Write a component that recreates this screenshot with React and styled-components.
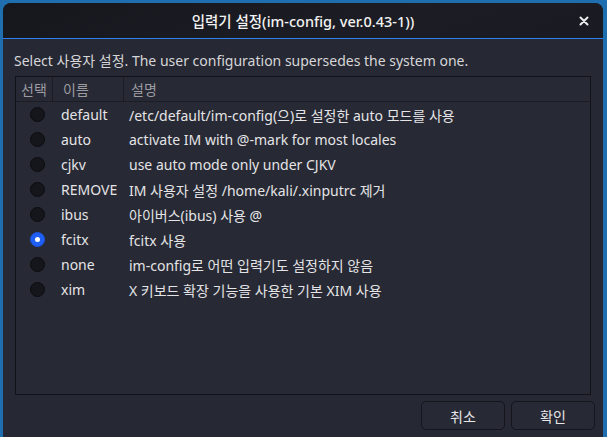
import React from "react";
import styled, { createGlobalStyle } from "styled-components";

const GlobalStyle = createGlobalStyle`
  html, body {
    margin: 0;
    padding: 0;
    background: #1f6eaf;
    overflow: hidden;
  }
  body {
    font-family: "Noto Sans", "Noto Sans CJK KR", sans-serif;
    font-size: 14px;
  }
`;

const Desktop = styled.div`
  width: 607px;
  height: 437px;
  padding: 3px 4px 0 3px;
  box-sizing: border-box;
  overflow: hidden;
`;

const Dialog = styled.div`
  width: 600px;
  height: 460px;
  background: #262833;
  border-radius: 8px 8px 0 0;
  overflow: hidden;
  display: flex;
  flex-direction: column;
`;

const Header = styled.div`
  height: 35px;
  flex-shrink: 0;
  background: linear-gradient(160deg, #16171d 0%, #1c1d24 60%, #1a1b22 100%);
  border-bottom: 1px solid #2f7fee;
  display: grid;
  grid-template-columns: 40px 1fr 40px;
  align-items: center;
`;

const Title = styled.div`
  grid-column: 2;
  text-align: center;
  color: #f2f2f2;
  font-size: 14.5px;
  font-weight: 500;
`;

const Close = styled.div`
  grid-column: 3;
  display: flex;
  justify-content: center;
  color: #e8e8e8;
  padding-left: 2px;
`;

const Body = styled.div`
  flex: 1;
  display: flex;
  flex-direction: column;
  padding: 12px 12px 0 12px;
`;

const Lead = styled.div`
  color: #d6d6d8;
  font-size: 14px;
  line-height: 20px;
  margin-left: -1px;
  margin-bottom: 5px;
`;

const TableBox = styled.div`
  width: 576px;
  height: 319px;
  box-sizing: border-box;
  border: 1px solid #121318;
  background: #272934;
  display: flex;
  flex-direction: column;
`;

const HeadRow = styled.div`
  display: grid;
  grid-template-columns: 37px 71px 1fr;
  height: 24px;
  border-bottom: 1px solid #1c1d24;
`;

const HeadCell = styled.div`
  color: #9c9ca2;
  font-size: 14px;
  display: flex;
  align-items: center;
  padding-left: ${(p) => p.$pad || 5}px;
  border-right: ${(p) => (p.$last ? "none" : "1px solid #1c1d24")};
`;

const Row = styled.div`
  display: grid;
  grid-template-columns: 42px 71px 1fr;
  height: 25px;
  align-items: center;
  color: #e4e4e6;
  font-size: 14px;
  &:first-of-type {
    margin-top: 1px;
  }
`;

const RadioCell = styled.div`
  display: flex;
  justify-content: center;
  padding-left: 1px;
`;

const Radio = styled.span`
  width: 15px;
  height: 15px;
  border-radius: 50%;
  box-sizing: border-box;
  background: ${(p) => (p.$on ? "#1f5ff5" : "#15161b")};
  border: 1px solid ${(p) => (p.$on ? "#1b55e0" : "#0c0c10")};
  display: flex;
  align-items: center;
  justify-content: center;
  &::after {
    content: "";
    display: ${(p) => (p.$on ? "block" : "none")};
    width: 5px;
    height: 5px;
    border-radius: 50%;
    background: #ffffff;
  }
`;

const NameCell = styled.div`
  padding-left: 3px;
  white-space: nowrap;
`;

const DescCell = styled.div`
  padding-left: 0;
  white-space: nowrap;
`;

const Footer = styled.div`
  display: flex;
  justify-content: flex-end;
  gap: 6px;
  margin-top: 6px;
  margin-right: -4px;
`;

const Button = styled.button`
  width: 84px;
  height: 29px;
  border-radius: 5px;
  border: 1px solid #15161c;
  background: #272935;
  color: #e6e6e8;
  font-family: "Noto Sans", "Noto Sans CJK KR", sans-serif;
  font-size: 14px;
  padding: 0;
`;

const rows = [
  ["default", "/etc/default/im-config(으)로 설정한 auto 모드를 사용"],
  ["auto", "activate IM with @-mark for most locales"],
  ["cjkv", "use auto mode only under CJKV"],
  ["REMOVE", "IM 사용자 설정 /home/kali/.xinputrc 제거"],
  ["ibus", "아이버스(ibus) 사용 @"],
  ["fcitx", "fcitx 사용", true],
  ["none", "im-config로 어떤 입력기도 설정하지 않음"],
  ["xim", "X 키보드 확장 기능을 사용한 기본 XIM 사용"],
];

const CloseIcon = () => (
  <svg width="10" height="10" viewBox="0 0 10 10">
    <path d="M1.5 1.5 L8.5 8.5 M8.5 1.5 L1.5 8.5" stroke="#ececec" strokeWidth="2" strokeLinecap="round" />
  </svg>
);

export default function App() {
  return (
    <>
      <GlobalStyle />
      <Desktop>
        <Dialog>
          <Header>
            <Title>입력기 설정(im-config, ver.0.43-1))</Title>
            <Close>
              <CloseIcon />
            </Close>
          </Header>
          <Body>
            <Lead>Select 사용자 설정. The user configuration supersedes the system one.</Lead>
            <TableBox>
              <HeadRow>
                <HeadCell $pad={5}>선택</HeadCell>
                <HeadCell $pad={10}>이름</HeadCell>
                <HeadCell $pad={7} $last>
                  설명
                </HeadCell>
              </HeadRow>
              {rows.map(([name, desc, on]) => (
                <Row key={name}>
                  <RadioCell>
                    <Radio $on={on} />
                  </RadioCell>
                  <NameCell>{name}</NameCell>
                  <DescCell>{desc}</DescCell>
                </Row>
              ))}
            </TableBox>
            <Footer>
              <Button>취소</Button>
              <Button>확인</Button>
            </Footer>
          </Body>
        </Dialog>
      </Desktop>
    </>
  );
}
